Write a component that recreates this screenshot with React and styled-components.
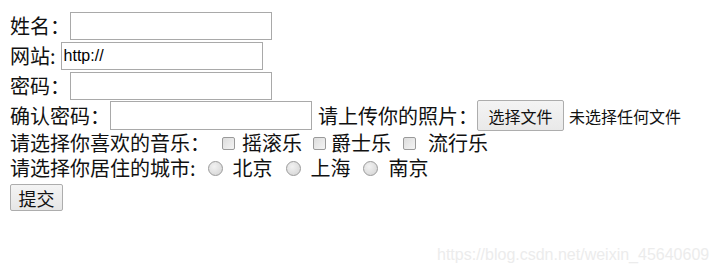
import React from "react";
import styled, { createGlobalStyle } from "styled-components";

const Global = createGlobalStyle`
  html, body { margin: 0; padding: 0; background: #fff; }
  body {
    font-family: "Noto Sans CJK SC", "Liberation Sans", sans-serif;
    color: #111;
  }
`;

const Page = styled.form`
  position: relative;
  width: 717px;
  height: 276px;
  box-sizing: border-box;
  padding: 10px 0 0 10px;
  display: flex;
  flex-direction: column;
  overflow: hidden;
`;

const Row = styled.div`
  display: flex;
  align-items: center;
  height: ${(p) => p.$h}px;
  margin-top: ${(p) => p.$mt || 0}px;
`;

const Label = styled.span`
  font-size: 20px;
  line-height: 20px;
  height: 20px;
  white-space: nowrap;
  margin-left: ${(p) => p.$ml || 0}px;
`;

const Small = styled.span`
  font-size: 16px;
  line-height: 1;
  white-space: nowrap;
  margin-left: ${(p) => p.$ml || 0}px;
`;

const TextInput = styled.input`
  box-sizing: border-box;
  width: 202px;
  height: ${(p) => p.$h || 28}px;
  margin: 0 0 0 ${(p) => p.$ml || 0}px;
  padding: 0 2px;
  border: 1px solid #a9a9a9;
  background: #fff;
  font-family: "Liberation Sans", Arial, sans-serif;
  font-size: 16px;
  color: #000;
  outline: none;
`;

const FileButton = styled.button`
  box-sizing: border-box;
  width: 87px;
  height: 31px;
  margin-left: ${(p) => p.$ml || 0}px;
  padding: 0;
  border: 1px solid #adadad;
  border-radius: 2px;
  background: linear-gradient(#f4f4f4, #e9e9e9);
  font-family: "Noto Sans CJK SC", sans-serif;
  font-size: 16px;
  color: #111;
`;

const Check = styled.input.attrs({ type: "checkbox" })`
  appearance: none;
  box-sizing: border-box;
  width: 13px;
  height: 13px;
  margin: 0 0 0 ${(p) => p.$ml || 0}px;
  border: 1px solid #9a9a9a;
  border-radius: 2px;
  background: linear-gradient(135deg, #dcdcdc, #f4f4f4);
`;

const Radio = styled.input.attrs({ type: "radio" })`
  appearance: none;
  box-sizing: border-box;
  width: 15px;
  height: 15px;
  margin: 0 0 0 ${(p) => p.$ml || 0}px;
  border: 1px solid #9a9a9a;
  border-radius: 50%;
  background: radial-gradient(circle at 40% 35%, #f2f2f2, #d2d2d2);
`;

const Submit = styled.button`
  box-sizing: border-box;
  width: 53px;
  height: 27px;
  padding: 0;
  border: 1px solid #adadad;
  border-radius: 2px;
  background: linear-gradient(#f4f4f4, #e6e6e6);
  font-family: "Noto Sans CJK SC", sans-serif;
  font-size: 18px;
  color: #111;
`;

const Watermark = styled.div`
  position: absolute;
  left: 437px;
  top: 246px;
  font-family: "Liberation Sans", Arial, sans-serif;
  font-size: 16px;
  color: #ececec;
  white-space: nowrap;
`;

export default function App() {
  return (
    <>
      <Global />
      <Page onSubmit={(e) => e.preventDefault()}>
        <Row $h={31}>
          <Label>姓名：</Label>
          <TextInput />
        </Row>
        <Row $h={30}>
          <Label>网站:</Label>
          <TextInput $ml={5} defaultValue="http://" />
        </Row>
        <Row $h={29}>
          <Label>密码：</Label>
          <TextInput type="password" />
        </Row>
        <Row $h={31}>
          <Label>确认密码：</Label>
          <TextInput $h={29} type="password" />
          <Label $ml={6}>请上传你的照片：</Label>
          <FileButton type="button" $ml={-1}>选择文件</FileButton>
          <Small $ml={5}>未选择任何文件</Small>
        </Row>
        <Row $h={24}>
          <Label>请选择你喜欢的音乐：</Label>
          <Check $ml={12} />
          <Label $ml={7}>摇滚乐</Label>
          <Check $ml={11} />
          <Label $ml={5}>爵士乐</Label>
          <Check $ml={12} />
          <Label $ml={12}>流行乐</Label>
        </Row>
        <Row $h={26}>
          <Label>请选择你居住的城市:</Label>
          <Radio $ml={12} name="city" />
          <Label $ml={10}>北京</Label>
          <Radio $ml={13} name="city" />
          <Label $ml={10}>上海</Label>
          <Radio $ml={12} name="city" />
          <Label $ml={11}>南京</Label>
        </Row>
        <Row $h={27} $mt={3}>
          <Submit type="submit">提交</Submit>
        </Row>
        <Watermark>https://blog.csdn.net/weixin_45640609</Watermark>
      </Page>
    </>
  );
}
